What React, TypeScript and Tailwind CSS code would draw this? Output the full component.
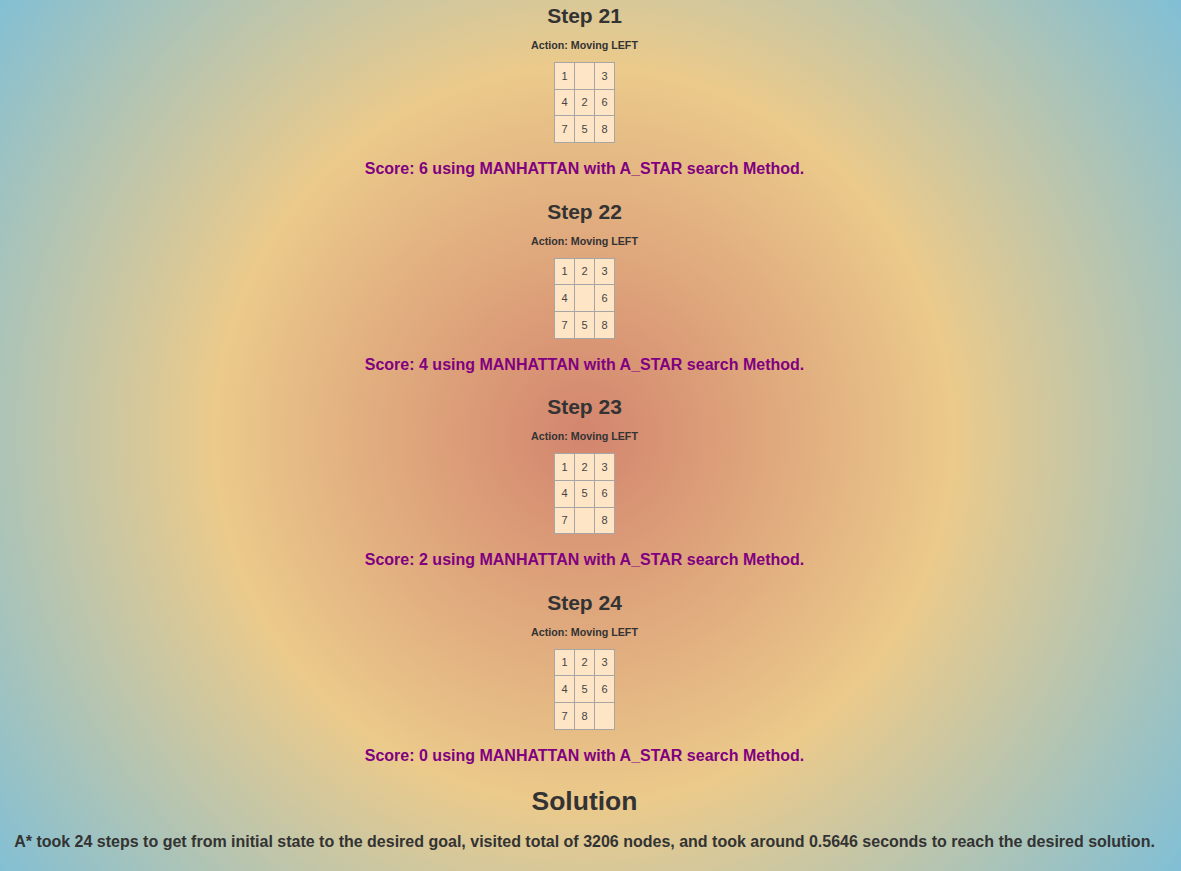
import React from "react";

type Step = { n: number; board: (number | null)[] };

const STEPS: Step[] = [
  { n: 21, board: [1, null, 3, 4, 2, 6, 7, 5, 8] },
  { n: 22, board: [1, 2, 3, 4, null, 6, 7, 5, 8] },
  { n: 23, board: [1, 2, 3, 4, 5, 6, 7, null, 8] },
  { n: 24, board: [1, 2, 3, 4, 5, 6, 7, 8, null] },
];

const SCORES: Record<number, number> = { 21: 6, 22: 4, 23: 2, 24: 0 };

function Board({ board }: { board: (number | null)[] }) {
  const rows = [board.slice(0, 3), board.slice(3, 6), board.slice(6, 9)];
  return (
    <table className="mx-auto border-collapse">
      <tbody>
        {rows.map((row, i) => (
          <tr key={i}>
            {row.map((v, j) => (
              <td
                key={j}
                className="w-[20px] h-[26.7px] p-0 border border-[#a8a6a4] bg-[#fee5c6] text-center text-[11px] text-[#444]"
              >
                {v ?? ""}
              </td>
            ))}
          </tr>
        ))}
      </tbody>
    </table>
  );
}

export default function App() {
  return (
    <div
      className="h-[871px] overflow-hidden bg-[radial-gradient(circle_at_584px_435px,#d3856e_0%,#ebca8b_50%,#80bfd6_100%)] text-center text-[#333]"
      style={{ fontFamily: '"Liberation Sans", Arial, sans-serif' }}
    >
      <div className="pt-[4px] pr-[12px]">
        {STEPS.map((s) => (
          <div key={s.n} className="mb-[20.5px]">
            <h2 className="text-[21px] font-bold leading-[24px]">Step {s.n}</h2>
            <h6 className="mt-[10px] text-[10.7px] font-bold leading-[14px]">Action: Moving LEFT</h6>
            <div className="mt-[10px]">
              <Board board={s.board} />
            </div>
            <p className="mt-[16px] text-[16px] font-bold leading-[20px] text-[#800080]">
              Score: {SCORES[s.n]} using MANHATTAN with A_STAR search Method.
            </p>
          </div>
        ))}
        <h1 className="mt-[1px] text-[26.5px] font-bold leading-[30px]">Solution</h1>
        <p className="mt-[16px] text-[16px] font-bold leading-[20px]">
          A* took 24 steps to get from initial state to the desired goal, visited total of 3206 nodes, and took around 0.5646 seconds to reach the desired solution.
        </p>
      </div>
    </div>
  );
}
